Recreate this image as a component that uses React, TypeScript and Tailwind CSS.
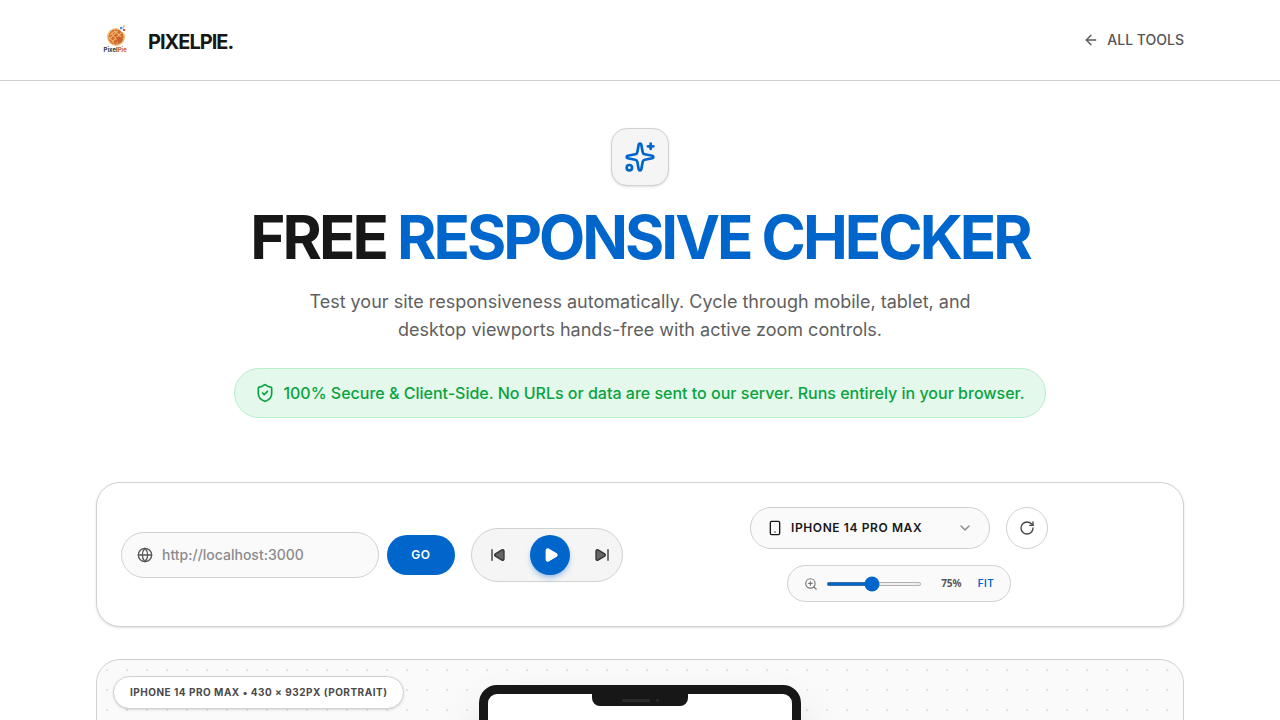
import { useState } from "react";
import {
    ArrowLeft,
    ChevronDown,
    Globe,
    Play,
    RotateCw,
    ShieldCheck,
    SkipBack,
    SkipForward,
    Smartphone,
    Sparkles,
    ZoomIn,
} from "lucide-react";

const devices = [
    { name: "iPhone 14 Pro Max", width: 430, height: 932, mode: "Portrait" },
    { name: "iPad Air", width: 820, height: 1180, mode: "Portrait" },
    { name: "MacBook Air", width: 1280, height: 832, mode: "Landscape" },
];

function Logo() {
    return (
        <svg viewBox="0 0 40 40" className="h-10 w-10" aria-hidden="true">
            <circle cx="20" cy="17" r="9" fill="#f3bd7c" />
            <circle cx="20" cy="17" r="7.6" fill="#cf6a2c" />
            <path
                d="M14 15l5-4M13.5 19l8-8M16 22l9-9M21 23l5-5M15 13l8 9M19 11l6 6M13 17l5 6"
                stroke="#f2b068"
                strokeWidth="1.1"
                strokeLinecap="round"
            />
            <path d="M20 17l6 0a6 6 0 0 1-4 6z" fill="#c9602a" />
            <path d="M23 5h8v7h-5l-3-3z" fill="#fff" />
            <rect x="24" y="7" width="2.4" height="2.2" fill="#4a90d9" />
            <rect x="27" y="5" width="2" height="2" fill="#f3cfa0" />
            <rect x="27" y="9" width="2.2" height="2" fill="#cf5a2c" />
            <rect x="26.6" y="7" width="1.4" height="1.6" fill="#a8cbee" />
            <text x="7.6" y="32" fontFamily="Inter, sans-serif" fontSize="6" fontWeight="700" fill="#333">
                Pixel<tspan fill="#d2622a">Pie</tspan>
            </text>
        </svg>
    );
}

function Header() {
    return (
        <header className="h-[81px] border-b border-[#d1d1d1] bg-white px-24">
            <div className="flex h-full items-center justify-between">
                <a href="#" className="flex items-center gap-3">
                    <Logo />
                    <span className="pt-1 text-xl font-bold tracking-tighter">PIXELPIE.</span>
                </a>
                <a href="#" className="flex items-center gap-2 text-sm font-medium text-[#555]">
                    <ArrowLeft className="h-4 w-4" />
                    ALL TOOLS
                </a>
            </div>
        </header>
    );
}

function Hero() {
    return (
        <section className="flex flex-col items-center text-center">
            <div className="rounded-2xl border border-[#d1d1d1] bg-[#f5f5f5] p-3 shadow-sm">
                <Sparkles className="h-8 w-8 text-[#0066cc]" />
            </div>
            <h1 className="my-4 text-6xl leading-[70px] font-bold tracking-tighter">
                FREE <span className="text-[#0066cc]">RESPONSIVE CHECKER</span>
            </h1>
            <p className="max-w-2xl text-lg leading-7 text-[#5f5f5f]">
                Test your site responsiveness automatically. Cycle through mobile, tablet, and desktop viewports
                hands-free with active zoom controls.
            </p>
            <div className="mt-6 flex items-center gap-2 rounded-full border border-[#b7efcc] bg-[#e5f8ec] px-5 py-3 font-medium text-[#09a340]">
                <ShieldCheck className="h-5 w-5" />
                <span>
                    100% Secure &amp; Client-Side. No URLs or data are sent to our server. Runs entirely in your browser.
                </span>
            </div>
        </section>
    );
}

export default function App() {
    const [url, setUrl] = useState("");
    const [index, setIndex] = useState(0);
    const [zoom, setZoom] = useState(75);
    const device = devices[index];
    const scale = zoom / 100;

    const step = (by: number) => setIndex((index + by + devices.length) % devices.length);

    return (
        <div className="min-h-screen bg-white font-['Inter',sans-serif] text-[#171717]">
            <Header />
            <main className="px-24 pt-[47px] pb-16">
                <Hero />

                {/* Controls */}
                <section className="mt-16 flex items-center gap-4 rounded-3xl border border-[#d1d1d1] bg-white p-6 shadow-sm">
                    <form className="flex items-center gap-2" onSubmit={(e) => e.preventDefault()}>
                        <label className="flex h-[46px] w-[258px] items-center gap-[9px] rounded-full border border-[#d1d1d1] bg-[#fafafa] px-[15px]">
                            <Globe className="h-4 w-4 shrink-0 text-[#555]" strokeWidth={2} />
                            <input
                                type="text"
                                aria-label="Website URL"
                                value={url}
                                onChange={(e) => setUrl(e.target.value)}
                                placeholder="http://localhost:3000"
                                className="w-full min-w-0 bg-transparent text-sm font-medium outline-none placeholder:text-[#8b8b8b]"
                            />
                        </label>
                        <button
                            type="submit"
                            className="h-10 w-[68px] rounded-full bg-[#0066cc] text-xs font-semibold tracking-wider text-white"
                        >
                            GO
                        </button>
                    </form>

                    <div className="flex h-[54px] items-center gap-3 rounded-full border border-[#d1d1d1] bg-[#f5f5f5] pl-1.5">
                        <button
                            aria-label="Previous device"
                            onClick={() => step(-1)}
                            className="flex h-10 w-10 items-center justify-center text-[#333]"
                        >
                            <SkipBack className="h-4 w-4 fill-[#666]" />
                        </button>
                        <button
                            aria-label="Play"
                            className="flex h-10 w-10 items-center justify-center rounded-full bg-[#0066cc] text-white shadow-md shadow-[#0066cc]/30"
                        >
                            <Play className="ml-0.5 h-4 w-4 fill-white" />
                        </button>
                        <button
                            aria-label="Next device"
                            onClick={() => step(1)}
                            className="flex h-10 w-10 items-center justify-center text-[#333]"
                        >
                            <SkipForward className="h-4 w-4 fill-[#666]" />
                        </button>
                    </div>

                    <div className="flex flex-1 flex-wrap items-center justify-center gap-4">
                        <div className="relative w-60">
                            <Smartphone className="pointer-events-none absolute top-[13px] left-[17px] h-4 w-4" />
                            <select
                                aria-label="Device"
                                value={index}
                                onChange={(e) => setIndex(Number(e.target.value))}
                                className="h-[42px] w-full appearance-none rounded-full border border-[#d1d1d1] bg-[#fafafa] pr-10 pl-10 text-xs font-semibold tracking-wider uppercase"
                            >
                                {devices.map((d, i) => (
                                    <option key={d.name} value={i}>
                                        {d.name}
                                    </option>
                                ))}
                            </select>
                            <ChevronDown className="pointer-events-none absolute top-[13px] right-[17px] h-4 w-4 text-[#888]" />
                        </div>
                        <button
                            aria-label="Rotate device"
                            className="flex h-[42px] w-[42px] items-center justify-center rounded-full border border-[#d1d1d1] bg-white text-[#444]"
                        >
                            <RotateCw className="h-4 w-4" />
                        </button>
                        <div className="flex h-[37px] items-center rounded-full border border-[#d1d1d1] bg-[#fafafa] px-4 text-[10px]">
                            <ZoomIn className="h-3.5 w-3.5 text-[#777]" />
                            <input
                                type="range"
                                aria-label="Zoom"
                                min={25}
                                max={130}
                                value={zoom}
                                onChange={(e) => setZoom(Number(e.target.value))}
                                className="ml-2 h-1 w-24 accent-[#0066cc]"
                            />
                            <span className="w-10 text-right font-['Noto_Sans',sans-serif] font-bold text-[#555]">
                                {zoom}%
                            </span>
                            <button
                                onClick={() => setZoom(75)}
                                className="ml-4 font-semibold tracking-wider text-[#0066cc]"
                            >
                                FIT
                            </button>
                        </div>
                    </div>
                </section>

                {/* Preview stage */}
                <section className="relative mt-8 flex justify-center overflow-hidden rounded-3xl border border-[#d1d1d1] bg-[#fafafa] bg-[radial-gradient(#d9e3f7_1px,transparent_1px)] bg-[size:20px_20px] py-[25px]">
                    <div className="absolute top-4 left-4 rounded-full border border-[#d1d1d1] bg-white px-4 py-2 text-[10px] leading-[15px] font-bold tracking-wider text-[#4a4a4a] uppercase shadow-sm">
                        {device.name} • {device.width} × {device.height}px ({device.mode})
                    </div>
                    <div
                        className="relative rounded-[18px] border-[9px] border-[#171717] bg-white shadow-2xl"
                        style={{ width: device.width * scale, height: device.height * scale }}
                    >
                        <div className="mx-auto flex h-3 w-24 items-center justify-center gap-1.5 rounded-b-lg bg-[#171717]">
                            <span className="h-[3px] w-7 rounded-full bg-[#2b2b2b]" />
                            <span className="h-[3px] w-[3px] rounded-full bg-[#2b2b2b]" />
                        </div>
                    </div>
                </section>
            </main>
        </div>
    );
}
